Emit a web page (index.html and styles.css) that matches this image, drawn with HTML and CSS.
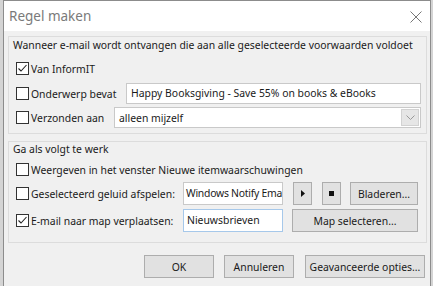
FILE: index.html
```html
<!DOCTYPE html>
<html lang="nl">
<head>
    <meta charset="UTF-8">
    <title>Regel maken</title>
    <link rel="stylesheet" href="styles.css">
</head>
<body>
    <div class="dialog">
        <div class="titlebar">
            <span class="title">Regel maken</span>
            <svg class="close" width="12" height="12" viewBox="0 0 12 12">
                <path d="M0.5 0.5 L11.5 11.5 M11.5 0.5 L0.5 11.5" stroke="#777" stroke-width="1" fill="none"/>
            </svg>
        </div>

        <div class="content">
            <div class="group group-when">
                <div class="group-title">Wanneer e-mail wordt ontvangen die aan alle geselecteerde voorwaarden voldoet</div>

                <div class="row row-from">
                    <span class="check">
                        <svg width="11" height="11" viewBox="0 0 11 11"><path d="M1.5 5.5 L4 8 L9.5 2" stroke="#222" stroke-width="1.1" fill="none"/></svg>
                    </span>
                    <span class="label">Van InformIT</span>
                </div>

                <div class="row row-subject">
                    <span class="check"></span>
                    <span class="label label-subject">Onderwerp bevat</span>
                    <div class="textbox textbox-subject">Happy Booksgiving - Save 55% on books &amp; eBooks</div>
                </div>

                <div class="row row-sent">
                    <span class="check"></span>
                    <span class="label label-sent">Verzonden aan</span>
                    <div class="combo">
                        <span class="combo-value">alleen mijzelf</span>
                        <span class="combo-arrow">
                            <svg width="9" height="5" viewBox="0 0 9 5"><path d="M0.5 0.5 L4.5 4.5 L8.5 0.5" stroke="#999" fill="none"/></svg>
                        </span>
                    </div>
                </div>
            </div>

            <div class="group group-do">
                <div class="group-title">Ga als volgt te werk</div>

                <div class="row row-alert">
                    <span class="check"></span>
                    <span class="label">Weergeven in het venster Nieuwe itemwaarschuwingen</span>
                </div>

                <div class="row row-sound">
                    <span class="check"></span>
                    <span class="label label-action">Geselecteerd geluid afspelen:</span>
                    <div class="textbox textbox-small textbox-sound">Windows Notify Ema</div>
                    <button class="btn btn-icon">
                        <svg width="4" height="7" viewBox="0 0 4 7"><path d="M0 0 L4 3.5 L0 7 Z" fill="#111"/></svg>
                    </button>
                    <button class="btn btn-icon">
                        <svg width="5" height="5" viewBox="0 0 5 5"><rect width="5" height="5" fill="#111"/></svg>
                    </button>
                    <button class="btn btn-browse">Bladeren...</button>
                </div>

                <div class="row row-move">
                    <span class="check">
                        <svg width="11" height="11" viewBox="0 0 11 11"><path d="M1.5 5.5 L4 8 L9.5 2" stroke="#222" stroke-width="1.1" fill="none"/></svg>
                    </span>
                    <span class="label label-action">E-mail naar map verplaatsen:</span>
                    <div class="textbox textbox-small textbox-focus">Nieuwsbrieven</div>
                    <button class="btn btn-folder">Map selecteren...</button>
                </div>
            </div>

            <div class="actions">
                <button class="btn btn-dialog">OK</button>
                <button class="btn btn-dialog btn-cancel">Annuleren</button>
                <button class="btn btn-advanced">Geavanceerde opties...</button>
            </div>
        </div>
    </div>
</body>
</html>
```

FILE: styles.css
```css
* {
    margin: 0;
    padding: 0;
    box-sizing: border-box;
}

body {
    font-family: "Noto Sans", "Open Sans", sans-serif;
    font-size: 10.4px;
    color: #1a1a1a;
    background: #d4d4d4;
    width: 433px;
    height: 286px;
    overflow: hidden;
}

.dialog {
    margin-left: 3px;
    width: 428px;
    height: 286px;
    border: 1px solid #8c8c8c;
    border-bottom: none;
    background: #f0f0f0;
}

.titlebar {
    height: 30px;
    background: #fff;
    display: flex;
    align-items: center;
    justify-content: space-between;
    padding: 0 8px 0 5px;
}

.title {
    font-size: 13.5px;
    color: #7a7a7a;
    margin-top: -1px;
}

.close {
    margin-top: 2px;
}

.content {
    padding: 5px 3px 0 4px;
}

/* group boxes */
.group {
    border: 1px solid #dcdcdc;
    padding: 0 0 0 4px;
}

.group-title {
    line-height: 15px;
    height: 15px;
    white-space: nowrap;
}

.group-when {
    height: 98px;
}

.group-when .group-title {
    margin-top: 1px;
}

.group-do {
    margin-top: 7px;
    height: 102px;
}

/* rows */
.row {
    display: flex;
    align-items: center;
    padding-left: 3px;
}

.row-from {
    height: 21px;
    margin-top: 5px;
}

.row-subject {
    height: 21px;
    margin-top: 4px;
}

.row-sent {
    height: 21px;
    margin-top: 3px;
}

.row-alert {
    height: 21px;
    margin-top: 2px;
}

.row-sound {
    height: 23px;
    margin-top: 2px;
}

.row-move {
    height: 23px;
    margin-top: 4px;
}

.check {
    width: 13px;
    height: 13px;
    border: 1px solid #333;
    background: #fff;
    flex: none;
    display: flex;
    align-items: center;
    justify-content: center;
}

.label {
    margin-left: 2px;
    white-space: nowrap;
}

.label-subject {
    width: 95px;
}

.label-sent {
    width: 83px;
}

.label-action {
    width: 152px;
}

/* inputs */
.textbox {
    height: 21px;
    border: 1px solid #c9c9c9;
    background: #fff;
    padding: 0 4px;
    line-height: 19px;
    white-space: nowrap;
    overflow: hidden;
    flex: none;
}

.textbox-subject {
    width: 295px;
}

.combo {
    width: 307px;
    height: 21px;
    border: 1px solid #c9c9c9;
    background: #fff;
    display: flex;
    align-items: center;
    justify-content: space-between;
    padding: 0 1px 0 4px;
    flex: none;
}

.combo-arrow {
    width: 18px;
    height: 17px;
    background: #e6e6e6;
    border: 1px solid #d2d2d2;
    display: flex;
    align-items: center;
    justify-content: center;
}

.textbox-small {
    width: 100px;
    height: 23px;
    line-height: 21px;
    padding: 0 3px;
}

.textbox-sound {
    padding: 0 2px;
    letter-spacing: -0.25px;
}

.textbox-focus {
    border-color: #a6c8ea;
}

/* buttons */
.btn {
    font-family: inherit;
    font-size: 10.4px;
    color: #1a1a1a;
    background: #e1e1e1;
    border: 1px solid #adadad;
    height: 23px;
    display: flex;
    align-items: center;
    justify-content: center;
    flex: none;
}

.btn-icon {
    width: 19px;
    margin-left: 10px;
}

.btn-browse {
    width: 68px;
    margin-left: 9px;
}

.btn-folder {
    width: 126px;
    margin-left: 9px;
}

.actions {
    display: flex;
    justify-content: flex-end;
    margin-top: 12px;
    padding-right: 2px;
}

.btn-dialog {
    width: 70px;
}

.btn-cancel {
    margin-left: 10px;
}

.btn-advanced {
    width: 120px;
    margin-left: 11px;
}
```
